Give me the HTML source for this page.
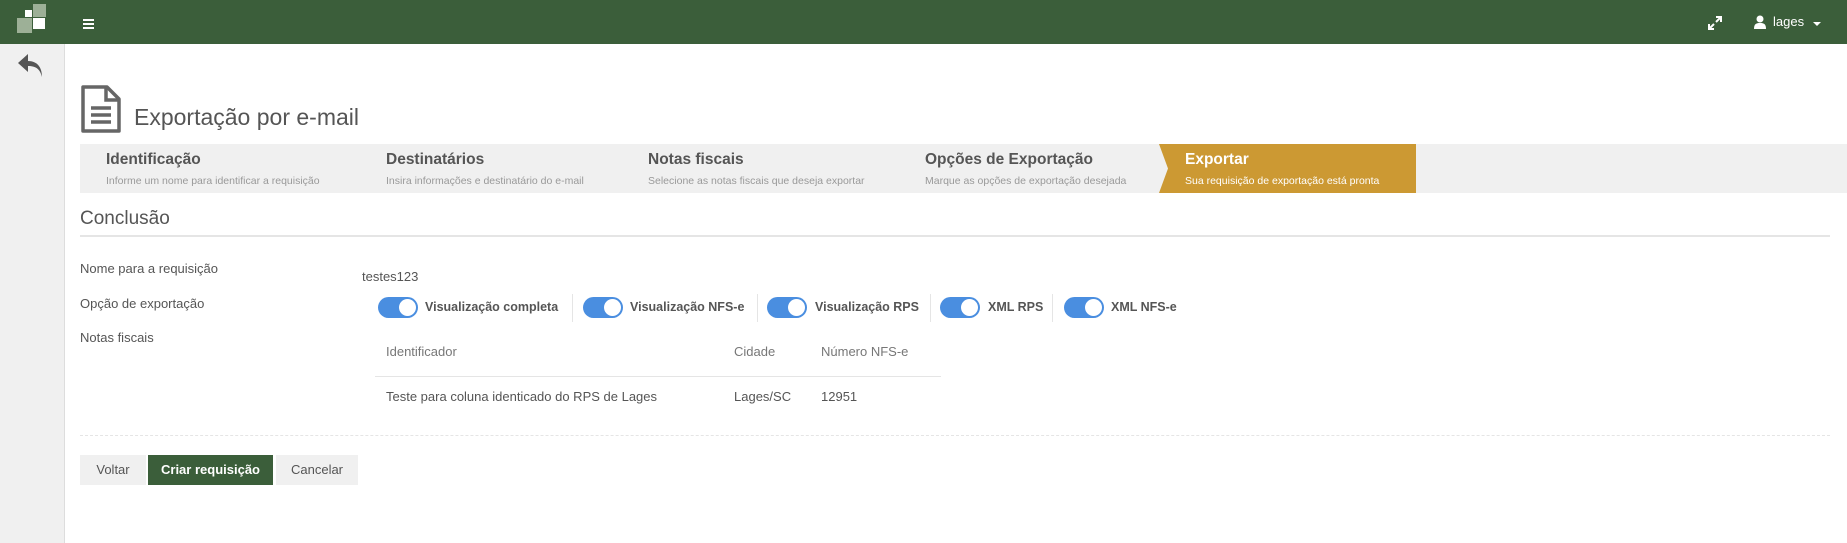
<!DOCTYPE html>
<html><head><meta charset="utf-8"><style>
*{margin:0;padding:0;box-sizing:border-box}
body{width:1847px;height:543px;overflow:hidden;background:#fff;font-family:"Liberation Sans",sans-serif;color:#555;position:relative}
.a{position:absolute;white-space:nowrap}
.top{left:0;top:0;width:1847px;height:44px;background:#3b5e3a}
.side{left:0;top:44px;width:65px;height:499px;background:#f0f0f0;border-right:1px solid #ddd}
.steps{left:80px;top:144px;width:1767px;height:49px;background:#f0f0f0}
.st{font-size:15.5px;font-weight:bold;color:#555;top:151px}
.ss{font-size:10.5px;color:#999;top:175px}
.lbl{font-size:13px;color:#555;left:80px}
.tg{width:40px;height:21px;border-radius:11px;background:#4a8ee0;top:297px}
.tg:after{content:"";position:absolute;right:2px;top:2px;width:17px;height:17px;border-radius:50%;background:#fff}
.tl{font-size:12.5px;font-weight:bold;color:#555;top:300px}
.sep{top:294px;width:1px;height:28px;background:#e5e5e5}
.btn{top:455px;height:30px;font-size:13px;line-height:30px;text-align:center;background:#f0f0f0;color:#555}
</style></head><body>
<div class="a top"></div>
<div class="a" style="left:17px;top:18px;width:15px;height:15px;background:#9db097"></div>
<div class="a" style="left:25px;top:10px;width:7px;height:7px;background:#fff"></div>
<div class="a" style="left:33px;top:4px;width:13px;height:13px;background:#9db097"></div>
<div class="a" style="left:33px;top:18px;width:12px;height:11px;background:#fff"></div>
<div class="a" style="left:83px;top:19px;width:11px;height:2px;background:#fff;box-shadow:0 4px 0 #fff,0 8px 0 #fff"></div>
<svg class="a" style="left:1708px;top:16px" width="14" height="14" viewBox="0 0 14 14"><path d="M8 1h5v5M13 1L8 6M1 8v5h5M1 13l5-5" stroke="#fff" stroke-width="2" fill="none"/></svg>
<svg class="a" style="left:1754px;top:15px" width="12" height="14" viewBox="0 0 12 14"><circle cx="6" cy="4" r="3.5" fill="#fff"/><path d="M0 14c0-5 2-6 6-6s6 1 6 6z" fill="#fff"/></svg>
<div class="a" style="left:1773px;top:14px;font-size:13px;color:#fff">lages</div>
<div class="a" style="left:1813px;top:22px;border:4px solid transparent;border-top-color:#fff"></div>
<div class="a side"></div>
<svg class="a" style="left:16px;top:52px" width="30" height="26" viewBox="0 0 30 26"><path d="M12 2L2 11l10 9v-6c8 0 12 3 14 11 0-10-5-16-14-16z" fill="#555"/></svg>
<svg class="a" style="left:80px;top:84px" width="42" height="50" viewBox="0 0 42 50"><path d="M3 3h24l12 12v32H3z" fill="none" stroke="#666" stroke-width="3.5" stroke-linejoin="round"/><path d="M26 3v13h13" fill="none" stroke="#666" stroke-width="3.5"/><path d="M11 24h20M11 31h20M11 38h20" stroke="#666" stroke-width="3.5"/></svg>
<div class="a" style="left:134px;top:104px;font-size:23px;color:#555">Exportação por e-mail</div>
<div class="a steps"></div>
<svg class="a" style="left:1159px;top:144px" width="257" height="49"><path d="M0 0H257V49H0L9 24.5z" fill="#cc9933"/></svg>
<div class="a st" style="left:106px">Identificação</div><div class="a ss" style="left:106px">Informe um nome para identificar a requisição</div>
<div class="a st" style="left:386px">Destinatários</div><div class="a ss" style="left:386px">Insira informações e destinatário do e-mail</div>
<div class="a st" style="left:648px">Notas fiscais</div><div class="a ss" style="left:648px">Selecione as notas fiscais que deseja exportar</div>
<div class="a st" style="left:925px">Opções de Exportação</div><div class="a ss" style="left:925px">Marque as opções de exportação desejada</div>
<div class="a st" style="left:1185px;color:#fff">Exportar</div><div class="a ss" style="left:1185px;color:#fff">Sua requisição de exportação está pronta</div>
<div class="a" style="left:80px;top:208px;font-size:19px;color:#555">Conclusão</div>
<div class="a" style="left:80px;top:235px;width:1750px;height:2px;background:#e5e5e5"></div>
<div class="a lbl" style="top:261px">Nome para a requisição</div>
<div class="a lbl" style="top:296px">Opção de exportação</div>
<div class="a lbl" style="top:330px">Notas fiscais</div>
<div class="a" style="left:362px;top:269px;font-size:13px">testes123</div>
<div class="a tg" style="left:378px"></div><div class="a tl" style="left:425px">Visualização completa</div>
<div class="a sep" style="left:572px"></div>
<div class="a tg" style="left:583px"></div><div class="a tl" style="left:630px">Visualização NFS-e</div>
<div class="a sep" style="left:757px"></div>
<div class="a tg" style="left:767px"></div><div class="a tl" style="left:815px">Visualização RPS</div>
<div class="a sep" style="left:930px"></div>
<div class="a tg" style="left:940px"></div><div class="a tl" style="left:988px">XML RPS</div>
<div class="a sep" style="left:1052px"></div>
<div class="a tg" style="left:1064px"></div><div class="a tl" style="left:1111px">XML NFS-e</div>
<div class="a" style="left:386px;top:344px;font-size:13px;color:#777">Identificador</div>
<div class="a" style="left:734px;top:344px;font-size:13px;color:#777">Cidade</div>
<div class="a" style="left:821px;top:344px;font-size:13px;color:#777">Número NFS-e</div>
<div class="a" style="left:375px;top:376px;width:566px;height:1px;background:#e5e5e5"></div>
<div class="a" style="left:386px;top:389px;font-size:13px">Teste para coluna identicado do RPS de Lages</div>
<div class="a" style="left:734px;top:389px;font-size:13px">Lages/SC</div>
<div class="a" style="left:821px;top:389px;font-size:13px">12951</div>
<div class="a" style="left:80px;top:435px;width:1750px;border-top:1px dashed #e5e5e5"></div>
<div class="a btn" style="left:80px;width:66px">Voltar</div>
<div class="a btn" style="left:148px;width:125px;background:#3b5e3a;color:#fff;font-weight:bold">Criar requisição</div>
<div class="a btn" style="left:276px;width:82px">Cancelar</div>
</body></html>
